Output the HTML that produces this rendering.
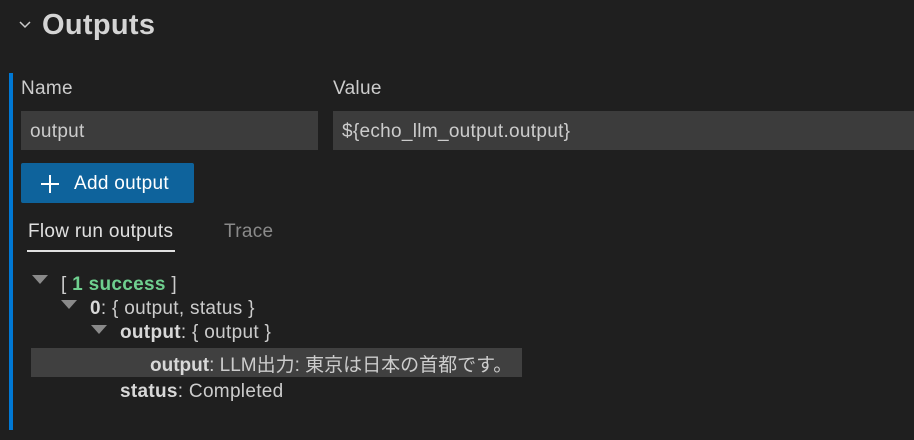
<!DOCTYPE html>
<html><head><meta charset="utf-8"><style>
body{margin:0;width:914px;height:440px;background:#1f1f1f;overflow:hidden;font-family:"Liberation Sans","Noto Sans CJK JP",sans-serif;color:#cccccc;position:relative}
.a{position:absolute;white-space:nowrap;letter-spacing:0.3px}
.tri{position:absolute;width:0;height:0;border-left:8px solid transparent;border-right:8px solid transparent;border-top:9px solid #8a8a8a}
b{color:#d8d8d8}
</style></head><body>
<svg class="a" style="left:18px;top:18px" width="14" height="14"><path d="M2 4 L7 9 L12 4" stroke="#ccc" stroke-width="1.5" fill="none"/></svg>
<div class="a" style="left:42px;top:9px;font-size:29px;font-weight:bold;color:#d4d4d4">Outputs</div>
<div class="a" style="left:9px;top:73px;width:4px;height:357px;background:#0078d4"></div>
<div class="a" style="left:21px;top:78px;font-size:19px">Name</div>
<div class="a" style="left:333px;top:78px;font-size:19px">Value</div>
<div class="a" style="left:21px;top:111px;width:297px;height:39px;background:#3c3c3c"></div>
<div class="a" style="left:30px;top:121px;font-size:19px">output</div>
<div class="a" style="left:333px;top:111px;width:581px;height:39px;background:#3c3c3c"></div>
<div class="a" style="left:342px;top:121px;font-size:19px">${echo_llm_output.output}</div>
<div class="a" style="left:21px;top:163px;width:173px;height:40px;background:#0e639c;border-radius:2px"></div>
<svg class="a" style="left:39px;top:173px" width="22" height="22"><path d="M11 2V20M2 11H20" stroke="#fff" stroke-width="2"/></svg>
<div class="a" style="left:74px;top:173px;font-size:19px;color:#fff">Add output</div>
<div class="a" style="left:28px;top:221px;font-size:19px;color:#e0e0e0">Flow run outputs</div>
<div class="a" style="left:27px;top:250px;width:148px;height:2px;background:#e0e0e0"></div>
<div class="a" style="left:224px;top:221px;font-size:19px;color:#8a8a8a">Trace</div>
<div class="tri" style="left:32px;top:275px"></div>
<div class="a" style="left:61px;top:274px;font-size:19px">[ <span style="color:#6fcf8f;font-weight:bold">1 success</span> ]</div>
<div class="tri" style="left:61px;top:300px"></div>
<div class="a" style="left:90px;top:298px;font-size:19px"><b>0</b>: { output, status }</div>
<div class="tri" style="left:91px;top:325px"></div>
<div class="a" style="left:120px;top:322px;font-size:19px"><b>output</b>: { output }</div>
<div class="a" style="left:31px;top:348px;width:491px;height:29px;background:#404040"></div>
<div class="a" style="left:150px;top:350px;font-size:19px;letter-spacing:0"><b>output</b>: LLM出力: 東京は日本の首都です。</div>
<div class="a" style="left:120px;top:381px;font-size:19px"><b>status</b>: Completed</div>
</body></html>
